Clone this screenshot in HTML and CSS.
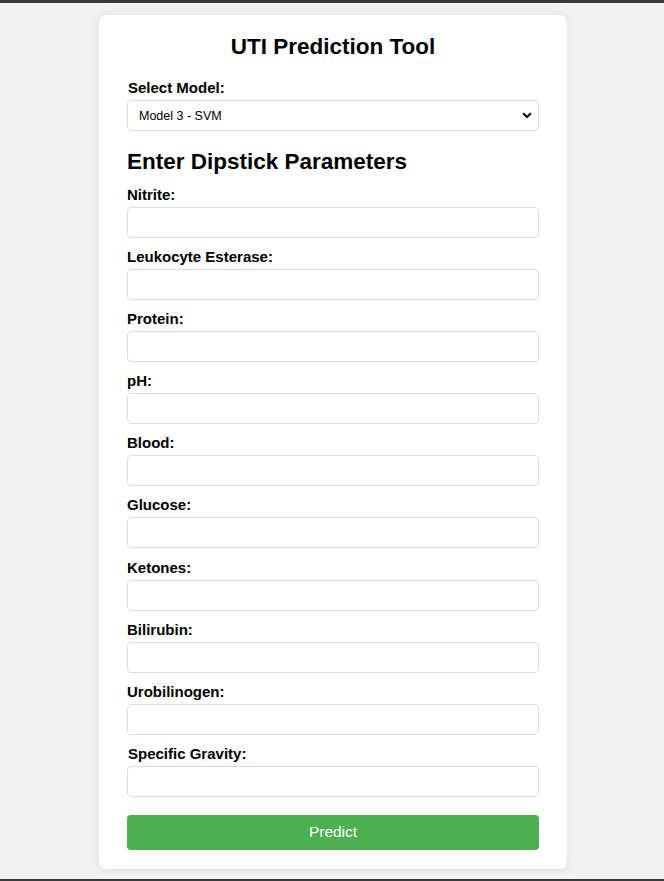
FILE: index.html
```html
<!DOCTYPE html>
<html>
<head>
<meta charset="utf-8">
<link rel="stylesheet" href="styles.css">
</head>
<body>
<div class="topbar"></div>
<main class="main">
  <div class="card">
    <h1 class="title">UTI Prediction Tool</h1>
    <label class="label label-model">Select Model:</label>
    <div class="select-wrap">
      <select class="select">
        <option>Model 3 - SVM</option>
      </select>
      <svg class="chev" width="10" height="7" viewBox="0 0 10 7"><path d="M1.2 1.2 L5 5 L8.8 1.2" fill="none" stroke="#000" stroke-width="2"/></svg>
    </div>
    <h2 class="subtitle">Enter Dipstick Parameters</h2>
    <label class="label">Nitrite:</label><input class="input" type="text">
    <label class="label">Leukocyte Esterase:</label><input class="input" type="text">
    <label class="label">Protein:</label><input class="input" type="text">
    <label class="label">pH:</label><input class="input" type="text">
    <label class="label">Blood:</label><input class="input" type="text">
    <label class="label">Glucose:</label><input class="input" type="text">
    <label class="label">Ketones:</label><input class="input" type="text">
    <label class="label">Bilirubin:</label><input class="input" type="text">
    <label class="label">Urobilinogen:</label><input class="input" type="text">
    <label class="label label-indent">Specific Gravity:</label><input class="input" type="text">
    <button class="btn">Predict</button>
  </div>
</main>
<div class="bottombar"></div>
</body>
</html>
```
FILE: styles.css
```css
html, body {
  margin: 0;
  padding: 0;
  height: 100%;
}
body {
  background: #f2f2f2;
  font-family: "Liberation Sans", Arial, sans-serif;
  display: flex;
  flex-direction: column;
  overflow: hidden;
}
.topbar {
  height: 3px;
  background: #3a3a3a;
  flex: none;
}
.bottombar {
  height: 2px;
  background: #3a3a3a;
  flex: none;
}
.main {
  flex: 1;
  display: flex;
  justify-content: center;
  align-items: flex-start;
  padding-top: 12px;
  padding-left: 2px;
}
.card {
  background: #fff;
  width: 412px;
  padding: 19px 28px 19px;
  border-radius: 8px;
  box-shadow: 0 0 10px rgba(0,0,0,0.1);
  display: flex;
  flex-direction: column;
}
.title {
  margin: 0 0 21px;
  text-align: center;
  font-size: 22.5px;
  line-height: 25px;
  font-weight: bold;
  color: #000;
}
.subtitle {
  margin: 18px 0 11px;
  font-size: 22.5px;
  line-height: 26px;
  font-weight: bold;
  color: #000;
}
.label {
  display: block;
  font-size: 15px;
  line-height: 17px;
  font-weight: bold;
  color: #000;
  margin-bottom: 4px;
}
.label-model {
  padding-left: 1px;
  line-height: 16px;
  margin-bottom: 4px;
}
.label-indent {
  padding-left: 1px;
}
.select-wrap {
  position: relative;
}
.select {
  display: block;
  width: 100%;
  height: 31px;
  box-sizing: border-box;
  border: 1px solid #ddd;
  border-radius: 4px;
  background: #fff;
  font-family: "Liberation Sans", Arial, sans-serif;
  font-size: 12.5px;
  color: #000;
  padding: 0 11px;
  appearance: none;
  -webkit-appearance: none;
}
.chev {
  position: absolute;
  right: 7px;
  top: 12px;
  pointer-events: none;
}
.input {
  display: block;
  width: 100%;
  height: 31px;
  box-sizing: border-box;
  border: 1px solid #ddd;
  border-radius: 4px;
  background: #fff;
  margin: 0 0 10.1px;
  padding: 0 8px;
}
.btn {
  margin-top: 8px;
  height: 35px;
  width: 100%;
  border: none;
  border-radius: 4px;
  background: #4caf50;
  color: #fff;
  font-family: "Liberation Sans", Arial, sans-serif;
  font-size: 15.5px;
}
```
